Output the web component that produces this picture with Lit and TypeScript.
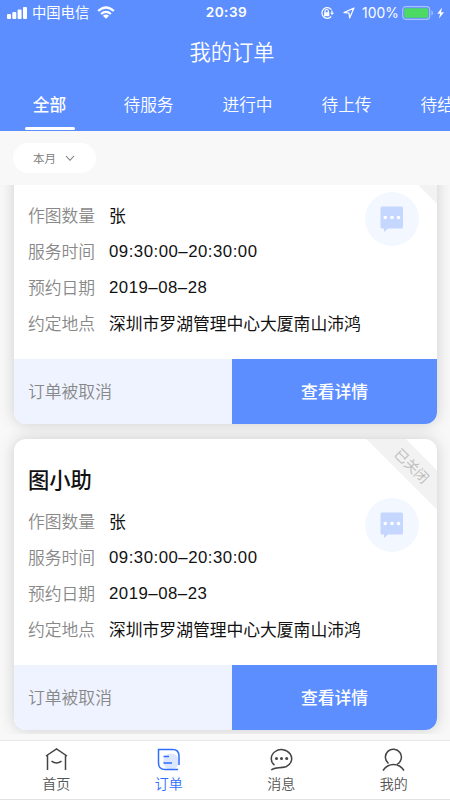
import { LitElement, html, css, svg } from "lit";
import { customElement, property } from "lit/decorators.js";

@customElement("status-bar")
class StatusBar extends LitElement {
  static styles = css`
    :host { display: flex; align-items: center; height: 25px; color: #fff; position: relative; padding: 0 8px 0 7px; }
    .left, .right { display: flex; align-items: center; }
    .carrier { font-size: 14.3px; line-height: 24px; margin: 0 8px 1px 5px; font-weight: 400; }
    .time { position: absolute; left: 3px; right: 0; top: 0; line-height: 25px; text-align: center; font-size: 13.6px; font-weight: 600; font-family: Inter, sans-serif; letter-spacing: .5px; }
    .right { margin-left: auto; }
    .pct { font-family: Inter, sans-serif; font-size: 13.8px; font-weight: 400; margin: 0 3px 0 7px; letter-spacing: .1px; }
    svg { display: block; }
    .nav { margin-left: 9px; }
  `;
  render() {
    return html`
      <div class="left">
        <svg width="20" height="13" viewBox="0 0 20 13" fill="#fff">
          <rect x="0" y="8" width="4" height="5" rx="1" /><rect x="5.3" y="6" width="4" height="7" rx="1" />
          <rect x="10.6" y="3.5" width="4" height="9.5" rx="1" /><rect x="16" y="1" width="4" height="12" rx="1" />
        </svg>
        <span class="carrier">中国电信</span>
        <svg width="18" height="13" viewBox="0 0 18 13" fill="none" stroke="#fff" stroke-width="2.3">
          <path d="M1.2 5Q9-2 16.8 5M4.1 8Q9 3.7 13.9 8" /><path d="M9 12.7L5.9 9.7Q9 7.2 12.1 9.7Z" fill="#fff" stroke="none" />
        </svg>
      </div>
      <span class="time">20:39</span>
      <div class="right">
        <svg width="14" height="14" viewBox="0 0 14 14" fill="none" stroke="#fff" stroke-width="1.2">
          <path d="M11.4 3.7A5.3 5.3 0 1 0 11.2 10.5M11.6 4.4Q12.2 5.6 12.1 7" /><path d="M10.1 6.7H14L12.1 9Z" fill="#fff" stroke="none" />
          <rect x="4.1" y="6.2" width="5.2" height="4" fill="#fff" stroke="none" /><path d="M5 6.6V5.2a1.7 1.7 0 0 1 3.4 0V6.6" />
        </svg>
        <svg class="nav" width="12" height="12" viewBox="0 0 12 12" fill="none" stroke="#fff" stroke-width="1.2" stroke-linejoin="round"><path d="M11 1L1 5.6L6 6L6.6 11Z" /></svg>
        <span class="pct">100%</span>
        <svg width="40" height="14" viewBox="0 0 40 14" overflow="visible">
          <rect x=".7" y=".7" width="27" height="12.6" rx="3" fill="none" stroke="#a9c1fe" stroke-width="1.2" />
          <rect x="2.2" y="2.2" width="24" height="9.6" rx="1.5" fill="#4cd964" />
          <path d="M29.5 4.6Q31 5.4 31 7T29.5 9.4Z" fill="#a9c1fe" /><path d="M40 1.5L35.3 7.8H38.1L37 12.6L42 6.2H39Z" fill="#fff" />
        </svg>
      </div>`;
  }
}

@customElement("order-card")
class OrderCard extends LitElement {
  @property() date = "";
  static styles = css`
    :host { display: block; position: relative; height: 291.5px; box-sizing: border-box; border-radius: 12px; background: #fff; box-shadow: 0 0 15px rgba(0, 0, 0, .17); }
    .card { height: 100%; border-radius: 12px; overflow: hidden; position: relative; display: flex; flex-direction: column; }
    .body { flex: 1; padding: 22px 14px 0; }
    .name { font-size: 21.3px; font-weight: 500; line-height: 35px; height: 42px; color: #111; }
    .row { display: flex; line-height: 36px; height: 36px; font-size: 16.8px; color: #111; font-weight: 400; }
    .label { color: #888; width: 81px; font-weight: 350; }
    .num { font-family: "Liberation Sans", "Noto Sans CJK SC", sans-serif; letter-spacing: .5px; line-height: 38px; }
    .foot { display: flex; height: 65px; line-height: 65px; font-size: 16.8px; }
    .state { width: 204px; padding-left: 14px; background: #eef3ff; color: #888; }
    .more { flex: 1; background: #5c8eff; color: #fff; text-align: center; font-weight: 500; }
    .ribbon { position: absolute; right: -50px; top: 12px; width: 150px; height: 28px; line-height: 28px; text-align: center; text-indent: 1px; background: #f2f2f2; color: #bbb; font-size: 14px; transform: rotate(45deg); }
    .chat { position: absolute; left: 351px; top: 59.5px; width: 54px; height: 54px; border-radius: 50%; background: #f3f7ff; }
    .chat svg { display: block; }
  `;
  row(label: string, value: string) {
    const numeric = /^\d/.test(value);
    return html`<div class="row"><span class="label">${label}</span><span class=${numeric ? "num" : ""}>${value}</span></div>`;
  }
  render() {
    return html`<div class="card">
      <div class="body">
        <div class="name">图小助</div>
        ${this.row("作图数量", "张")}
        ${this.row("服务时间", "09:30:00–20:30:00")}
        ${this.row("预约日期", this.date)}
        ${this.row("约定地点", "深圳市罗湖管理中心大厦南山沛鸿")}
      </div>
      <div class="foot"><div class="state">订单被取消</div><div class="more">查看详情</div></div>
      <div class="ribbon">已关闭</div>
      <div class="chat"><svg width="54" height="54" viewBox="0 0 54 54">
        <path d="M17 14.5H36.5Q38 14.5 38 16V35Q38 36.5 36.5 36.5H23L19 40V36.5H17Q15.5 36.5 15.5 35V16Q15.5 14.5 17 14.5Z" fill="#c6d7ff" />
        <g fill="#fff"><circle cx="20.3" cy="25.5" r="1.8" /><circle cx="27" cy="25.5" r="1.8" /><circle cx="33.5" cy="25.5" r="1.8" /></g>
      </svg></div>
    </div>`;
  }
}

const icons = [
  svg`<path d="M1 8L11.5 1L22 8M2.5 7.5V22M20.5 7.5V22M6.5 13.2Q11.5 16.8 16.5 13.2" />`,
  svg`<circle cx="14" cy="13.5" r="8" fill="#dce7ff" stroke="none" /><path d="M22 17V8Q22 1.5 15.5 1.5H1.5V15Q1.5 21.5 8 21.5H21M6.5 8.5H12M6.5 15H15" />`,
  svg`<path d="M4.5 17.2A10.2 9 0 1 1 16 18.7C9 20.5 5 19 1.2 22" /><g fill="#444" stroke="none"><circle cx="6.5" cy="10.5" r="1.5" /><circle cx="11.5" cy="10.5" r="1.5" /><circle cx="16.7" cy="10.5" r="1.5" /></g>`,
  svg`<path d="M6.5 15.5A8 8 0 1 1 15 16.3M1 22.5Q5 16.5 11.5 16.5T22 22.5" />`,
];

@customElement("app-root")
class AppRoot extends LitElement {
  static styles = css`
    :host { display: flex; flex-direction: column; height: 800px; width: 450px; overflow: hidden; background: #f8f8f8; font-family: "Noto Sans CJK SC", sans-serif; font-weight: 350; }
    .head { height: 131px; background: #5c8eff; color: #fff; display: flex; flex-direction: column; flex: none; }
    .title { height: 53px; line-height: 51px; text-align: center; font-size: 21.3px; padding-left: 14px; }
    .tabs { height: 53px; display: flex; font-size: 16.7px; line-height: 53px; white-space: nowrap; overflow: hidden; }
    .tab { flex: 0 0 99px; text-align: center; display: flex; flex-direction: column; align-items: center; }
    .tab.on { font-weight: 500; }
    .bar { width: 50px; height: 3px; border-radius: 2px; background: #fff; margin-top: -4px; }
    .filter { height: 54px; flex: none; padding: 12px 13px 0; box-sizing: border-box; }
    .pill { width: 83px; height: 30px; border-radius: 15px; background: #fff; color: #777; font-size: 11.5px; line-height: 28px; display: flex; align-items: center; gap: 9px; padding-left: 20px; box-sizing: border-box; }
    .list { height: 549px; flex: none; overflow: hidden; padding: 0 13px 4px 14px; display: flex; flex-direction: column; justify-content: flex-end; gap: 14.5px; box-sizing: border-box; }
    order-card { flex: none; }
    .nav { margin-top: 6px; height: 60px; box-sizing: border-box; border-top: 1px solid #e9e9e9; border-bottom: 1px solid #e2e2e2; background: #fff; display: flex; }
    .item { flex: 1; display: flex; flex-direction: column; align-items: center; padding-top: 7px; font-size: 14px; color: #555; }
    .item svg { stroke: #444; fill: none; stroke-width: 1.5; display: block; }
    .item.on { color: #2f6fff; }
    .item.on svg { stroke: #2f6fff; }
    .item span { line-height: 22px; }
  `;
  render() {
    const tabs = ["全部", "待服务", "进行中", "待上传", "待结算"];
    const nav = ["首页", "订单", "消息", "我的"];
    return html`
      <div class="head">
        <status-bar></status-bar>
        <div class="title">我的订单</div>
        <div class="tabs">${tabs.map((t, i) => html`<div class="tab ${i === 0 ? "on" : ""}">${t}${i === 0 ? html`<div class="bar"></div>` : ""}</div>`)}</div>
      </div>
      <div class="filter"><div class="pill">本月<svg width="10" height="7" viewBox="0 0 10 7" fill="none" stroke="#777" stroke-width="1.1"><path d="M1 1L5 5.3L9 1" /></svg></div></div>
      <div class="list"><order-card date="2019–08–28"></order-card><order-card date="2019–08–23"></order-card></div>
      <div class="nav">${nav.map((t, i) => html`<div class="item ${i === 1 ? "on" : ""}"><svg width="23" height="24" viewBox="0 0 23 24">${icons[i]}</svg><span>${t}</span></div>`)}</div>`;
  }
}
